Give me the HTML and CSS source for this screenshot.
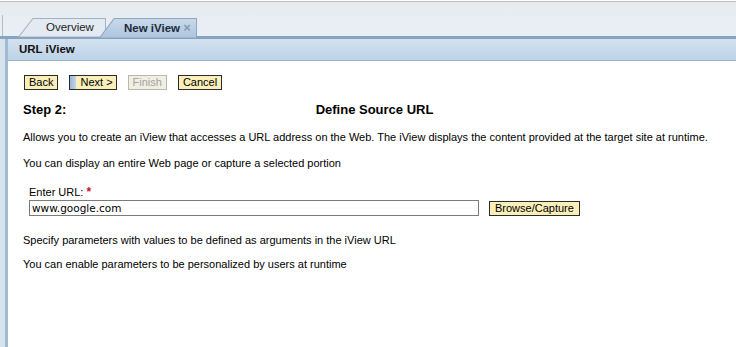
FILE: index.html
```html
<!DOCTYPE html>
<html lang="en">
<head>
    <meta charset="UTF-8">
    <title>URL iView</title>
    <link rel="stylesheet" href="styles.css">
</head>
<body>
    <div class="tabbar">
        <div class="corner"></div>
        <div class="tabs">
            <div class="tab tab-overview">
                <svg class="tab-shape" viewBox="0 0 88 18" preserveAspectRatio="none">
                    <polygon points="0.5,18 15,0.5 87.5,0.5 87.5,18" fill="#e3eaf2" stroke="#9fb2c6" stroke-width="1"/>
                </svg>
                <span class="tab-label">Overview</span>
            </div>
            <div class="tab tab-active">
                <svg class="tab-shape" viewBox="0 0 98 18" preserveAspectRatio="none">
                    <defs>
                        <linearGradient id="act" x1="0" y1="0" x2="0" y2="1">
                            <stop offset="0" stop-color="#c9d9ea"/>
                            <stop offset="1" stop-color="#adc5df"/>
                        </linearGradient>
                    </defs>
                    <polygon points="0.5,18 15,0.5 97.5,0.5 97.5,18" fill="url(#act)" stroke="#8ea6c2" stroke-width="1"/>
                </svg>
                <span class="tab-label"><b>New iView</b> <span class="close">&#215;</span></span>
            </div>
        </div>
    </div>
    <div class="frame">
        <div class="sidebar"></div>
        <div class="main">
            <div class="title-bar">URL iView</div>
            <div class="content">
                <div class="buttons">
                    <button class="btn">Back</button>
                    <button class="btn btn-focus">Next &gt;</button>
                    <button class="btn btn-disabled">Finish</button>
                    <button class="btn">Cancel</button>
                </div>
                <div class="step">
                    <span class="step-no">Step 2:</span>
                    <span class="step-title">Define Source URL</span>
                </div>
                <p>Allows you to create an iView that accesses a URL address on the Web. The iView displays the content provided at the target site at runtime.</p>
                <p>You can display an entire Web page or capture a selected portion</p>
                <div class="url-field">
                    <label for="url">Enter URL: <span class="req">*</span></label>
                    <div class="url-row">
                        <input id="url" type="text" value="www.google.com">
                        <button class="btn btn-wide">Browse/Capture</button>
                    </div>
                </div>
                <p>Specify parameters with values to be defined as arguments in the iView URL</p>
                <p class="last">You can enable parameters to be personalized by users at runtime</p>
            </div>
        </div>
    </div>
</body>
</html>
```

FILE: styles.css
```css
body {
    margin: 0;
    font-family: "Liberation Sans", Arial, sans-serif;
    font-size: 11px;
    color: #000;
    background: #fff;
}

.tabbar {
    display: flex;
    height: 34px;
    border-top: 1px solid #b9bdc2;
    margin-top: 1px;
    background: linear-gradient(#e7ebef, #e9eff6);
    border-bottom: 3px solid #8aa3c0;
}

.corner {
    width: 2px;
    margin-top: 13px;
    border-right: 1px solid #b4bcc6;
}

.tabs {
    display: flex;
    align-items: flex-end;
    padding-left: 15px;
}

.tab {
    display: grid;
    height: 18px;
}

.tab-shape,
.tab-label {
    grid-area: 1 / 1;
}

.tab-shape {
    width: 100%;
    height: 100%;
}

.tab-overview {
    width: 88px;
}

.tab-overview .tab-label {
    padding-left: 28px;
    line-height: 19px;
    font-size: 11.5px;
    color: #222;
}

.tab-active {
    width: 98px;
    margin-left: -7px;
}

.tab-active .tab-label {
    padding-left: 25px;
    line-height: 19px;
    font-size: 11.5px;
    color: #1c2a3a;
}

.close {
    color: #8a98a8;
    font-weight: bold;
    font-size: 13px;
}

.frame {
    display: flex;
    min-height: 309px;
}

.sidebar {
    width: 5px;
    background: #d9e3ed;
    border-right: 3px solid #9fbad3;
}

.main {
    flex: 1;
}

.title-bar {
    height: 21px;
    line-height: 21px;
    padding-left: 11px;
    font-weight: bold;
    font-size: 11.5px;
    background: linear-gradient(#d3e1ef, #bdd3e8);
    border-bottom: 1px solid #9ab4cd;
    color: #111;
}

.content {
    padding: 14px 10px 0 15px;
}

.buttons {
    display: flex;
    gap: 11px;
    padding-left: 1px;
}

.btn {
    font-family: "Liberation Sans", Arial, sans-serif;
    font-size: 11px;
    height: 15px;
    line-height: 13px;
    padding: 0 4px;
    background: #fbefb9;
    border: 1px solid #2a2a2a;
    color: #000;
    margin: 0;
}

.btn-focus {
    background: linear-gradient(90deg, #9db6d6 0, #c5d5e8 6px, #fbefb9 6px);
    padding-left: 10px;
    padding-right: 3px;
}

.btn-disabled {
    background: #f1efe3;
    border-color: #b9b8ae;
    color: #a3a39f;
}

.btn-wide {
    padding: 0 5px;
}

.step {
    display: grid;
    grid-template-columns: 1fr auto 1fr;
    font-weight: bold;
    font-size: 13px;
    margin-top: 12px;
}

.step-title {
    grid-column: 2;
}

.step-no {
    grid-column: 1;
    grid-row: 1;
}

p {
    margin: 14px 0 0 0;
}

.url-field {
    margin-top: 16px;
    padding-left: 6px;
}

.url-field label {
    display: block;
    line-height: 15px;
}

.req {
    color: #c8102e;
    font-weight: bold;
    font-size: 12px;
}

.url-row {
    display: flex;
    gap: 10px;
    align-items: center;
}

.url-row input {
    width: 450px;
    height: 16px;
    box-sizing: border-box;
    border: 1px solid #7b7b7b;
    padding: 0 2px;
    font-family: "DejaVu Sans", sans-serif;
    font-size: 10.5px;
    margin: 0;
}

.url-field + p {
    margin-top: 18px;
}

p.last {
    margin-top: 12px;
}
```
